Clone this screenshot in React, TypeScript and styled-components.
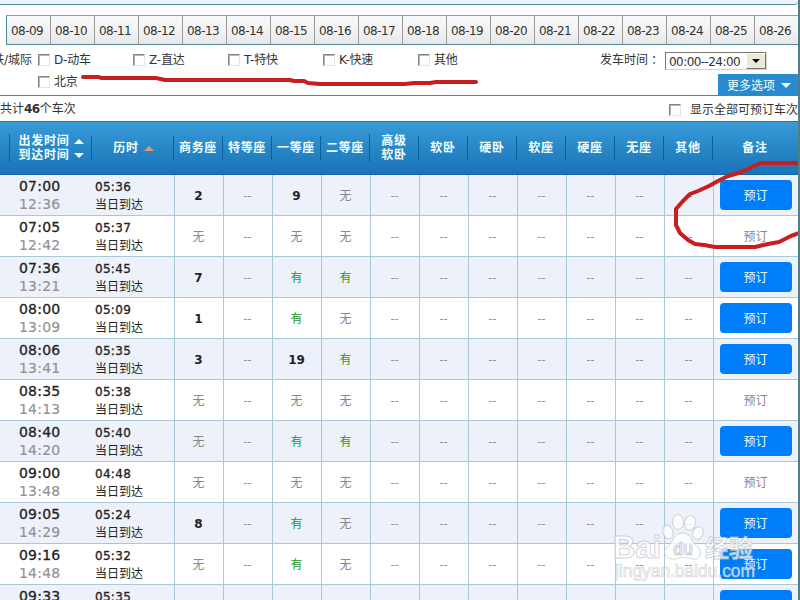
import React from "react";
import styled, { createGlobalStyle } from "styled-components";

const Global = createGlobalStyle`
  html, body { margin: 0; padding: 0; overflow: hidden; }
  body { background: #fff; }
  * { box-sizing: border-box; }
`;

const Page = styled.main`
  position: relative;
  width: 800px;
  height: 600px;
  overflow: hidden;
  background: #fff;
  border-right: 2px solid #4f7f89;
  color: #333;
  font: 12px/16px "DejaVu Sans", "Noto Sans CJK SC", sans-serif;
  white-space: nowrap;
`;

const TopPanel = styled.div`
  height: 5px;
  background: #edf2f9;
  border-bottom: 1px solid #4e8aa0;
  border-bottom-right-radius: 4px;
`;

const DateBar = styled.nav`
  display: flex;
  margin-top: 10px;
  height: 30px;
  padding-left: 6px;
`;

const DateTab = styled.div`
  flex: 0 0 44px;
  height: 30px;
  border: 1px solid #999;
  border-right: 0;
  border-bottom-color: #4e8797;
  background: linear-gradient(#f8f8f8, #f3f3f3 50%, #e7e7e7);
  line-height: 30px;
  padding-left: 4px;
  letter-spacing: -0.55px;
  &:first-child { border-left-color: #4e8aa0; }
`;

const Filters = styled.section`
  position: relative;
  height: 51px;
  border-bottom: 1px solid #4e8797;
  padding-top: 7px;
`;

const FilterRow = styled.div`
  display: flex;
  height: 22px;
  line-height: 16px;
`;

const Cut = styled.div`
  width: 38px;
  display: flex;
  justify-content: flex-end;
  padding-right: 6px;
  overflow: hidden;
`;

const Option = styled.label`
  display: flex;
  width: 95px;
  gap: 4px;
  letter-spacing: -0.2px;
`;

const Check = styled.span`
  flex: none;
  width: 12px;
  height: 12px;
  margin-top: 2px;
  background: #fff;
  border: 1px solid #85857d;
  border-right-color: #e6e5dc;
  border-bottom-color: #e6e5dc;
  box-shadow: inset 1px 1px #b9b8b0;
`;

const Departure = styled.div`
  display: flex;
  margin-left: 87px;
`;

const Colon = styled.span`
  font-family: "Noto Sans CJK TC", sans-serif;
`;

const Select = styled.div`
  display: flex;
  justify-content: space-between;
  margin-left: 5px;
  width: 102px;
  height: 18px;
  border: 1px solid #77776e;
  border-right-color: #d4d0c8;
  border-bottom-color: #d4d0c8;
  line-height: 18px;
  padding-left: 3px;
  letter-spacing: -0.57px;
`;

const SelectButton = styled.span`
  display: grid;
  place-items: center;
  width: 20px;
  height: 16px;
  background: #ece9d8;
  border: 1px solid #fff;
  border-right-color: #77756b;
  border-bottom-color: #77756b;
`;

const Triangle = styled.i<{ $up?: boolean; $color?: string; $size?: number }>`
  width: 0;
  height: 0;
  border: ${p => p.$size ?? 5}px solid transparent;
  ${p => p.$up ? "border-top: 0; border-bottom-color" : "border-bottom: 0; border-top-color"}: ${p => p.$color ?? "#eaffff"};
`;

const More = styled.div`
  position: absolute;
  right: 0;
  bottom: -1px;
  width: 80px;
  height: 22px;
  display: flex;
  align-items: center;
  gap: 6px;
  padding: 1px 0 0 9px;
  background: #288bd0;
  color: #f2ffff;
`;

const Summary = styled.div`
  display: flex;
  justify-content: space-between;
  height: 25px;
  padding: 5px 0 0;
  b { letter-spacing: -0.5px; }
`;

const Available = styled.div`
  display: flex;
  gap: 9px;
  padding-top: 1px;
`;

const Heading = styled.div`
  display: grid;
  grid-template-columns: 9px 82px 82px repeat(11, 49px) 85px;
  align-items: center;
  height: 54px;
  border-top: 1px solid #287996;
  border-bottom: 1px solid #1768a4;
  background: linear-gradient(#399bd8, #1873b7);
  color: #f1ffff;
  font-weight: 700;
  line-height: 14px;
`;

const HeadCell = styled.div<{ $shift?: number }>`
  min-height: 24px;
  display: flex;
  align-items: center;
  justify-content: center;
  gap: 5px;
  padding-left: ${p => p.$shift ?? 0}px;
  border-left: 1px solid #0c5f9b;
  text-align: center;
  white-space: pre-line;
  letter-spacing: 0.7px;
`;

const Sorts = styled.span`
  display: flex;
  flex-direction: column;
  gap: 9px;
`;

const Train = styled.div<{ $shade: boolean }>`
  display: grid;
  grid-template-columns: 91px 83px repeat(11, 49px) 85px;
  height: 41px;
  background: ${p => p.$shade ? "#edf1f9" : "#fff"};
  border-bottom: 1px solid #a9c7d5;
`;

const Cell = styled.div`
  display: flex;
  align-items: center;
  justify-content: center;
  border-left: 1px solid #a9c7d5;
`;

const Seat = styled(Cell)<{ $kind: "no" | "yes" | "count" }>`
  color: ${p => p.$kind === "no" ? "#888" : p.$kind === "yes" ? "#269a26" : "#222"};
  font-weight: ${p => p.$kind === "count" ? 700 : 400};
  padding: 2px 1px 0 0;
`;

const Dash = styled(Cell)`
  color: #888;
  font-size: 11px;
  padding: 2px 1px 0 0;
`;

const Times = styled.div`
  padding: 2px 0 0 19px;
  font-size: 14px;
  line-height: 18px;
  letter-spacing: 0.2px;
`;

const Start = styled.div`
  color: #222;
  -webkit-text-stroke: 0.3px #222;
`;

const End = styled.div`
  color: #929292;
  -webkit-text-stroke: 0.15px #929292;
`;

const Duration = styled.div`
  padding: 4px 0 0 4px;
  line-height: 18px;
  color: #222;
`;

const Elapsed = styled.div`
  line-height: 17px;
  letter-spacing: 0.3px;
  -webkit-text-stroke: 0.3px #222;
`;

const Book = styled.button<{ $open: boolean }>`
  width: 72px;
  height: 30px;
  margin-right: 1px;
  border: 0;
  border-radius: 4px;
  padding: 1px 0 0;
  color: ${p => p.$open ? "#e6ffff" : "#888"};
  background: ${p => p.$open ? "#007dfb" : "transparent"};
  font: inherit;
`;

const Overlay = styled.svg`
  position: absolute;
  left: 0;
  top: 0;
  pointer-events: none;
`;

const dates = Array.from({ length: 18 }, (_, i) => `08-${String(i + 9).padStart(2, "0")}`);
const seats = ["商务座", "特等座", "一等座", "二等座", "高级\n软卧", "软卧", "硬卧", "软座", "硬座", "无座", "其他"];
const trains: [string, string, string, string, string, string, boolean][] = [
  ["07:00", "12:36", "05:36", "2", "9", "无", true],
  ["07:05", "12:42", "05:37", "无", "无", "无", false],
  ["07:36", "13:21", "05:45", "7", "有", "有", true],
  ["08:00", "13:09", "05:09", "1", "有", "无", true],
  ["08:06", "13:41", "05:35", "3", "19", "有", true],
  ["08:35", "14:13", "05:38", "无", "无", "无", false],
  ["08:40", "14:20", "05:40", "无", "有", "有", true],
  ["09:00", "13:48", "04:48", "无", "无", "无", false],
  ["09:05", "14:29", "05:24", "8", "有", "无", true],
  ["09:16", "14:48", "05:32", "无", "有", "无", true],
  ["09:33", "", "05:35", "", "", "", true],
];

function SeatCell({ value }: { value: string }) {
  if (value === "--") return <Dash>--</Dash>;
  return <Seat $kind={value === "无" ? "no" : value === "有" ? "yes" : "count"}>{value}</Seat>;
}

export default function App() {
  return (
    <Page>
      <Global />
      <TopPanel />
      <DateBar>{dates.map(d => <DateTab key={d}>{d}</DateTab>)}</DateBar>
      <Filters>
        <FilterRow>
          <Cut>高铁/城际</Cut>
          {["D-动车", "Z-直达", "T-特快", "K-快速", "其他"].map(t => <Option key={t}><Check />{t}</Option>)}
          <Departure>
            发车时间<Colon lang="zh-TW">：</Colon>
            <Select>00:00--24:00<SelectButton><Triangle $color="#000" $size={4} /></SelectButton></Select>
          </Departure>
        </FilterRow>
        <FilterRow>
          <Cut />
          <Option><Check />北京</Option>
        </FilterRow>
        <More>更多选项<Triangle /></More>
      </Filters>
      <Summary>
        <span>共计<b>46</b>个车次</span>
        <Available><Check />显示全部可预订车次</Available>
      </Summary>
      <Heading>
        <span />
        <HeadCell $shift={2}>{"出发时间\n到达时间"}<Sorts><Triangle $up /><Triangle /></Sorts></HeadCell>
        <HeadCell $shift={2}>历时<Triangle $up $color="#d39b73" /></HeadCell>
        {seats.map(s => <HeadCell key={s}>{s}</HeadCell>)}
        <HeadCell>备注</HeadCell>
      </Heading>
      {trains.map(([start, end, span, biz, first, second, open], i) => (
        <Train key={start} $shade={i % 2 === 0}>
          <Times><Start>{start}</Start><End>{end}</End></Times>
          <Duration><Elapsed>{span}</Elapsed>{end && <div>当日到达</div>}</Duration>
          {[biz, "--", first, second, "--", "--", "--", "--", "--", "--", "--"].map((v, j) => <SeatCell key={j} value={end ? v : ""} />)}
          <Cell><Book $open={open}>{end && "预订"}</Book></Cell>
        </Train>
      ))}
      <Overlay width="800" height="600" viewBox="0 0 800 600">
        <g fill="none" stroke="#c81e20" strokeWidth="4" strokeLinecap="round" strokeLinejoin="round">
          <path d="M83 77H98L102 78H156L165 80H290L294 81L304 81L308 83L320 84H405L414 83L430 83L436 82H476" />
          <path d="M802 163H761L752 167L742 172L728 176L718 181L709 186L698 191L690 194L683 201L676 209V225L680 233L688 240L695 244L704 245L715 247H755L768 244L779 242L791 236L802 232" />
        </g>
        <g fill="#fff" fillOpacity="0.75" stroke="#bcc1c8" strokeOpacity="0.7" strokeWidth="1">
          <ellipse cx="668" cy="532" rx="5" ry="7" transform="rotate(-15 668 532)" />
          <ellipse cx="678" cy="522" rx="5.5" ry="7.5" />
          <ellipse cx="690" cy="523" rx="5.5" ry="7.5" transform="rotate(12 690 523)" />
          <ellipse cx="698" cy="533" rx="5" ry="6.5" transform="rotate(20 698 533)" />
          <path d="M682 533C674 533 673 543 667 547C661 553 667 560 675 559C681 557 686 557 692 559C701 561 703 551 697 546C691 541 691 533 682 533Z" />
          <text x="613" y="558" fontFamily="Liberation Sans" fontWeight="700" fontSize="31" textLength="48" lengthAdjust="spacingAndGlyphs">Bai</text>
          <text x="673" y="555" fontFamily="Liberation Sans" fontWeight="700" fontSize="18" textLength="20" lengthAdjust="spacingAndGlyphs" fill="#e3e6ec">du</text>
          <text x="705" y="557" fontFamily="Noto Sans CJK SC" fontWeight="700" fontSize="24" textLength="48">经验</text>
          <text x="615" y="577" fontFamily="Liberation Sans" fontSize="17.5" textLength="140" lengthAdjust="spacingAndGlyphs" strokeWidth="0.7">jingyan.baidu.com</text>
        </g>
      </Overlay>
    </Page>
  );
}
